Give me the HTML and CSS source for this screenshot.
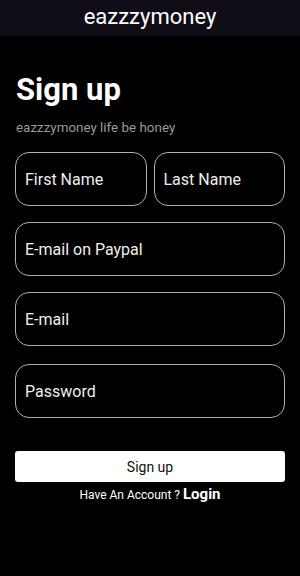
FILE: index.html
```html
<!DOCTYPE html>
<html>
<head>
<link rel="stylesheet" href="styles.css">
</head>
<body>

<div class="top-bar">eazzzymoney</div>

<div class="signup-page">
  <h1 class="title">Sign up</h1>
  <div class="subtitle">eazzzymoney life be honey</div>

  <form class="signup-form">
    <div class="name-row">
      <input type="text" class="field" placeholder="First Name">
      <input type="text" class="field" placeholder="Last Name">
    </div>
    <input type="text" class="field" placeholder="E-mail on Paypal">
    <input type="email" class="field" placeholder="E-mail">
    <input type="password" class="field field-last" placeholder="Password">

    <button type="button" class="signup-button">Sign up</button>
    <div class="login-line">Have An Account ? <span class="login-link">Login</span></div>
  </form>
</div>

</body>
</html>
```

FILE: styles.css
```css
body {
  background-color: #000;
  color: #fff;
  font-family: Roboto, "Liberation Sans", sans-serif;
  margin: 0;
}

.top-bar {
  background-color: #110d17;
  font-size: 22px;
  height: 36px;
  line-height: 34px;
  text-align: center;
}

.signup-page {
  padding: 0 15px;
}

.title {
  font-size: 31px;
  font-weight: bold;
  margin: 36px 0 0 1px;
  line-height: 36px;
}

.subtitle {
  color: #9a9a9a;
  font-size: 13.4px;
  margin: 12px 0 0 1px;
}

.signup-form {
  display: flex;
  flex-direction: column;
  gap: 16px;
  margin-top: 17px;
}

.name-row {
  display: flex;
  gap: 7px;
}

.field {
  background-color: #000;
  border: 1px solid #b0b0b0;
  border-radius: 14px;
  box-sizing: border-box;
  color: #fff;
  font-family: inherit;
  font-size: 16px;
  height: 54px;
  min-width: 0;
  padding: 0 9px;
  width: 100%;
}

.field::placeholder {
  color: #eee;
}

.field-last {
  margin-top: 2px;
}

.signup-button {
  background-color: #fff;
  border: none;
  border-radius: 3px;
  color: #111;
  font-family: inherit;
  font-size: 14px;
  height: 31px;
  margin-top: 17px;
}

.login-line {
  font-size: 12px;
  margin-top: -13px;
  text-align: center;
}

.login-link {
  font-size: 15px;
  font-weight: bold;
}
```
